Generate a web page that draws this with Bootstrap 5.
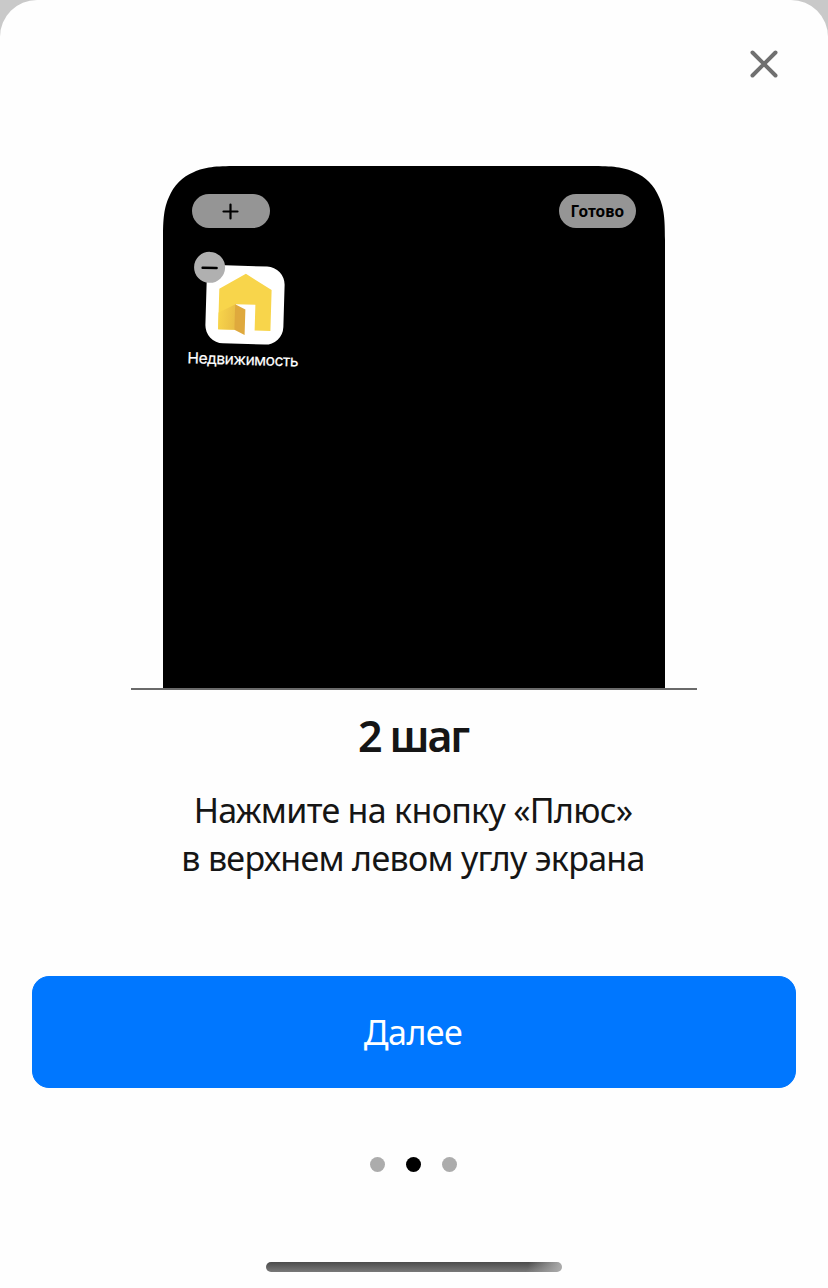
<!DOCTYPE html>
<html lang="ru">
<head>
<meta charset="utf-8">
<meta name="viewport" content="width=device-width, initial-scale=1">
<title>2 шаг</title>
<link href="https://cdn.jsdelivr.net/npm/bootstrap@5.3.0/dist/css/bootstrap.min.css" rel="stylesheet">
<style>
  body { background: #c9c9c9; font-family: "Noto Sans", sans-serif; color: #151515; }
  .sheet { height: 1288px; border-radius: 37px 37px 0 0; background: #fefefe; overflow: hidden; }
  .close-btn { width: 28px; height: 28px; margin: 50px 50px 0 0; line-height: 0; }
  .phone { width: 502px; height: 522px; margin-top: 88px; padding: 28px 29px 0 29px; }
  .phone-shape { inset: 0; }
  .phone-bar { height: 35px; }
  .pill { width: 77.5px; height: 34px; background: #959595; color: #000; font-size: 15.5px; font-weight: 700; margin-top: .4px; }
  .app { width: 118px; margin: 22px 0 0 -7px; transform: rotate(1.7deg); transform-origin: 62px 54px; }
  .app-tile { width: 78px; height: 78px; border-radius: 18px; background: #fff; margin: 14.5px 0 0 2.5px; }
  .app-minus { width: 31px; height: 31px; left: -13.3px; top: -12.5px; background: #b0b0b0; }
  .app-name { font: 400 15.5px/20px Inter, sans-serif; letter-spacing: -.45px; margin: 6.3px 0 0 1px; white-space: nowrap; -webkit-text-stroke: .2px #fff; }
  .ground { width: 566px; height: 2px; background: #6a6a6a; }
  .step-title { font-size: 43px; font-weight: 600; line-height: 54px; letter-spacing: -2.1px; margin: 19px 2px 0 0; }
  .step-text { font-size: 34px; line-height: 48px; letter-spacing: -.7px; margin: 23px 2px 0 0; }
  .next-btn { --bs-btn-bg: #07f; --bs-btn-border-color: #07f; width: 764px; height: 112px; margin-top: 94px; border-radius: 17px; font-size: 34px; letter-spacing: -.5px; padding-right: 14px; }
  .pager { gap: 21px; margin: 69px 1px 0 0; }
  .pager i { width: 15px; height: 15px; background: #acacac; }
  .pager .current { background: #000; }
  .home-bar { width: 296px; height: 10px; margin-top: 90px; background: linear-gradient(105deg, transparent 88%, #a9a9a9 99%), linear-gradient(#4b4b4b, #797979); }
</style>
</head>
<body>
<main class="sheet d-flex flex-column align-items-center">
  <button class="close-btn btn p-0 border-0 align-self-end" aria-label="Закрыть">
    <svg width="28" height="28" fill="none" stroke="#707070" stroke-width="4" stroke-linecap="round"><path d="M2.500 2.500l23 23M25.500 2.500l-23 23"/></svg>
  </button>

  <div class="phone position-relative flex-shrink-0">
    <svg class="phone-shape position-absolute" width="502" height="522"><path d="M0 522V74C0 52 1 42 6 31C11 19 19 11 31 6C42 1 52 0 74 0H428C450 0 460 1 471 6C483 11 491 19 496 31C501 42 502 52 502 74V522Z"/></svg>
    <div class="position-relative">
      <div class="phone-bar d-flex justify-content-between">
        <div class="pill rounded-pill d-flex align-items-center justify-content-center">
          <svg width="17" height="17" stroke="#000" stroke-width="2.200" stroke-linecap="round"><path d="M8.500 1.500v14M1.500 8.500h14"/></svg>
        </div>
        <div class="pill rounded-pill d-flex align-items-center justify-content-center"><span>Готово</span></div>
      </div>
      <div class="app d-flex flex-column align-items-center text-white">
        <div class="app-tile position-relative">
          <svg width="78" height="78" viewBox="0 0 79 79">
            <defs><linearGradient id="shade" x1="0" x2="1" y1="0" y2=".12"><stop offset="0" stop-color="#f8d54b"/><stop offset="1" stop-color="#eabf45"/></linearGradient></defs>
            <path d="M13 24 39.500 8 66 23.500V65H50V39H30V65H13Z" fill="#f8d54b"/>
            <path d="M13 48 30 39V65H13Z" fill="url(#shade)"/>
            <path d="M29.500 39 40 44V70L29.500 65Z" fill="#dfa93d"/>
          </svg>
          <div class="app-minus position-absolute rounded-circle d-flex align-items-center justify-content-center">
            <svg width="17" height="4" stroke="#000" stroke-width="2.500" stroke-linecap="round"><path d="M1.500 2h14"/></svg>
          </div>
        </div>
        <div class="app-name">Недвижимость</div>
      </div>
    </div>
  </div>
  <div class="ground flex-shrink-0"></div>

  <h1 class="step-title mb-0">2 шаг</h1>
  <p class="step-text text-center mb-0">Нажмите на кнопку «Плюс»<br>в верхнем левом углу экрана</p>

  <button class="next-btn btn btn-primary flex-shrink-0">Далее</button>

  <div class="pager d-flex">
    <i class="rounded-circle"></i><i class="current rounded-circle"></i><i class="rounded-circle"></i>
  </div>
  <div class="home-bar rounded-pill flex-shrink-0"></div>
</main>
<script src="https://cdn.jsdelivr.net/npm/bootstrap@5.3.0/dist/js/bootstrap.bundle.min.js"></script>
</body>
</html>
